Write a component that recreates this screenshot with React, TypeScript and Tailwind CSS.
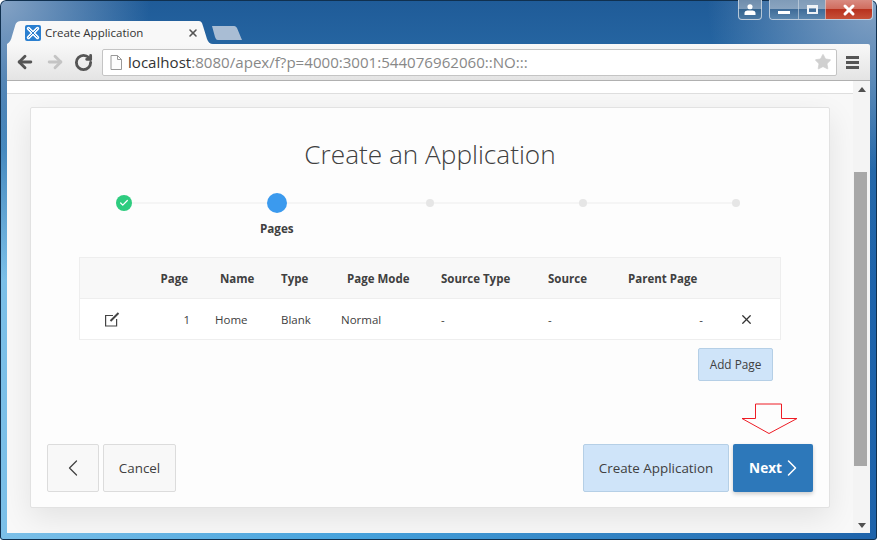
import { ArrowLeft, ArrowRight, Check, ChevronLeft, ChevronRight, RotateCw, Star, X } from 'lucide-react';

const OPEN_SANS = "font-['Open_Sans',sans-serif]";

const COLUMNS = [
  { head: '', headClass: '', cellClass: '' },
  { head: 'Page', headClass: 'text-right pr-[15px]', cellClass: 'text-right pr-[13px]', cell: '1' },
  { head: 'Name', headClass: 'pl-[17px]', cellClass: 'pl-[12px]', cell: 'Home' },
  { head: 'Type', headClass: 'pl-[12px]', cellClass: 'pl-[12px]', cell: 'Blank' },
  { head: 'Page Mode', headClass: 'pl-[18px]', cellClass: 'pl-[12px]', cell: 'Normal' },
  { head: 'Source Type', headClass: 'pl-[12px]', cellClass: 'pl-[12px]', cell: '-' },
  { head: 'Source', headClass: 'pl-[12px]', cellClass: 'pl-[12px]', cell: '-' },
  { head: 'Parent Page', headClass: 'pl-[12px]', cellClass: 'text-right pr-[11px]', cell: '-' },
  { head: '', headClass: '', cellClass: '' },
];

const GRID = 'grid grid-cols-[70px_53px_66px_60px_100px_107px_80px_98px_1fr] items-center';

function TitleBar() {
  return (
    <div className="flex h-[21px] shrink-0 justify-end pr-[4px]">
      <div className="flex h-[20px] w-[24px] flex-col items-center justify-center rounded-b-[4px] border border-t-0 border-[#d4dee8]/80 bg-[linear-gradient(180deg,#6f8dac_0,#7f9bb8_50%,#34648f_50%,#4a78a2_100%)]">
        <svg width="12" height="11" viewBox="0 0 12 12">
          <circle cx="6" cy="3" r="2.8" fill="#fff" />
          <path d="M0 12 V9.5 Q0 7.5 3 7 H9 Q12 7.5 12 9.5 V12 Z" fill="#fff" />
        </svg>
      </div>
      <div className="ml-[7px] flex h-[20px] rounded-b-[4px] border border-t-0 border-[#d4dee8]/80">
        <div className="flex w-[28px] justify-center rounded-bl-[4px] bg-[linear-gradient(180deg,#7f9bb8_0,#8ba5c0_50%,#3f6c98_50%,#5a86ae_100%)] pt-[11px]">
          <div className="h-[3px] w-[12px] bg-white" />
        </div>
        <div className="flex w-[27px] justify-center border-l border-[#d4dee8]/60 bg-[linear-gradient(180deg,#7f9bb8_0,#8ba5c0_50%,#3f6c98_50%,#5a86ae_100%)] pt-[5px]">
          <div className="h-[9px] w-[11px] border-2 border-t-[3px] border-[#eef2f6]" />
        </div>
        <div className="flex w-[47px] items-center justify-center rounded-br-[4px] border-l border-[#d4dee8]/60 bg-[linear-gradient(180deg,#d98a80_0,#cf6a5c_50%,#b8321f_50%,#c65038_100%)]">
          <X size={16} strokeWidth={4.5} className="text-white" />
        </div>
      </div>
    </div>
  );
}

function TabStrip() {
  return (
    <div className="relative mx-[7px] flex h-[23px] shrink-0 items-end">
      <div className="relative flex h-[23px] w-[206px] items-center pl-[18px] pr-[14px]">
        <svg className="absolute inset-0" width="206" height="23" viewBox="0 0 206 23">
          <path d="M0 23 C3 21 4 19 5 15 L8 5 C9 1 11 0 15 0 L191 0 C194 0 195 1 196 5 L200 18 C201 21 203 23 206 23 Z" fill="#f8f8f8" />
        </svg>
        <svg className="relative shrink-0" width="16" height="16" viewBox="0 0 16 16">
          <rect width="16" height="16" rx="2" fill="#2a7fd0" />
          <path d="M3.5 3.5 L12.5 12.5 M12.5 3.5 L3.5 12.5" stroke="#fff" strokeWidth="3.4" strokeLinecap="round" fill="none" />
          <path d="M3.5 3.5 L12.5 12.5 M12.5 3.5 L3.5 12.5" stroke="#2a7fd0" strokeWidth="1" fill="none" />
        </svg>
        <span className={`relative ml-[4px] flex-1 whitespace-nowrap text-[11.5px] text-[#333] ${OPEN_SANS}`}>Create Application</span>
        <X size={12} strokeWidth={3.2} className="relative text-[#555]" />
      </div>
      <svg className="mb-[4px] ml-[-1px]" width="30" height="14" viewBox="0 0 30 14">
        <path d="M0 0 L22 0 C24 0 24 1 25 2 L30 14 L6 14 C4 14 4 13 3 11 Z" fill="#a9bdd4" />
      </svg>
    </div>
  );
}

function Toolbar() {
  return (
    <div className="mx-[7px] flex h-[37px] shrink-0 items-center rounded-tr-[2px] border-b border-[#b0b0b0] bg-gradient-to-b from-[#f8f8f8] to-[#e4e4e4] pl-[8px] pr-[9px]">
      <ArrowLeft size={20} strokeWidth={3.4} className="text-[#555]" />
      <ArrowRight size={20} strokeWidth={3.4} className="ml-[10px] text-[#c4c4c4]" />
      <RotateCw size={19} strokeWidth={3.6} className="ml-[9px] text-[#555]" />
      <div className="ml-[9px] flex h-[27px] w-[735px] items-center rounded-[2px] border border-[#c4c4c4] bg-white pl-[7px] pr-[4px]">
        <svg width="12" height="15" viewBox="0 0 12 15" className="shrink-0">
          <path d="M1 .5 H7.5 L11.5 4.5 V14.5 H1 Z M7.5 .5 V4.5 H11.5" fill="#fdfdfd" stroke="#999" strokeWidth="1" />
        </svg>
        <span className={`ml-[6px] flex-1 whitespace-nowrap text-[15.1px] text-[#888] ${OPEN_SANS}`}>
          <span className="text-[#333]">localhost</span>:8080/apex/f?p=4000:3001:544076962060::NO:::
        </span>
        <Star size={18} fill="#d0d0d0" strokeWidth={1} className="text-[#d0d0d0]" />
      </div>
      <div className="ml-[9px] flex w-[13px] flex-col gap-[2px]">
        <div className="h-[3px] bg-[#555]" />
        <div className="h-[3px] bg-[#555]" />
        <div className="h-[3px] bg-[#555]" />
      </div>
    </div>
  );
}

function Stepper() {
  return (
    <div className="relative mt-[16px] grid h-[67px] grid-cols-5">
      <div className="absolute left-[76px] right-[76px] top-[12px] h-[2px] bg-[#f5f5f5]" />
      <div className="relative flex h-[26px] items-center justify-center">
        <div className="flex h-[16px] w-[16px] items-center justify-center rounded-full bg-[#2ecc7f]">
          <Check size={10} strokeWidth={3} className="text-white" />
        </div>
      </div>
      <div className="relative flex flex-col items-center">
        <div className="mt-[3px] h-[20px] w-[20px] rounded-full bg-[#3b9aee]" />
        <span className="mt-[7px] text-[11.7px] font-bold text-[#404040]">Pages</span>
      </div>
      {[0, 1, 2].map((i) => (
        <div key={i} className="relative flex h-[26px] items-center justify-center">
          <div className="h-[8px] w-[8px] rounded-full bg-[#e6e6e6]" />
        </div>
      ))}
    </div>
  );
}

function PagesTable() {
  return (
    <div className="mx-[32px] border border-[#eeeeee] bg-white text-[11.5px] text-[#404040]">
      <div className={`${GRID} h-[41px] border-b border-[#eeeeee] bg-[#f8f8f8] pt-[2px] text-[11.5px] font-bold`}>
        {COLUMNS.map((col, i) => (
          <div key={i} className={col.headClass}>{col.head}</div>
        ))}
      </div>
      <div className={`${GRID} h-[40px] pt-[2px]`}>
        <div className="pl-[24px]">
          <svg width="16" height="15" viewBox="0 0 16 15" className="-mt-[2px] text-[#444]">
            <path d="M9 3.5 H1.6 V14 H12.6 V7" fill="none" stroke="currentColor" strokeWidth="1.2" />
            <path d="M6.5 9 L14.5 1" fill="none" stroke="currentColor" strokeWidth="2" />
          </svg>
        </div>
        {COLUMNS.slice(1, 8).map((col) => (
          <div key={col.head} className={col.cellClass}>{col.cell}</div>
        ))}
        <div className="-mt-[2px] flex justify-center pr-[1px]">
          <X size={15} strokeWidth={2} className="text-[#333]" />
        </div>
      </div>
    </div>
  );
}

function Card() {
  return (
    <div className={`flex h-[401px] w-[800px] flex-col rounded-[2px] border border-[#e2e2e2] bg-[#fdfdfd] px-[16px] pb-[15px] pt-[26px] shadow-[0_10px_30px_rgba(0,0,0,0.09)] ${OPEN_SANS}`}>
      <h1 className="text-center text-[26.2px] font-light leading-[40px] text-[#404040]">Create an Application</h1>
      <Stepper />
      <PagesTable />
      <div className="mr-[40px] mt-[8px] flex justify-end">
        <button className="h-[33px] w-[75px] rounded-[2px] border border-[#b5cfe6] bg-[#cfe4f9] text-[11.8px] text-[#404040]">Add Page</button>
      </div>
      <div className="relative mt-auto flex h-[48px] items-stretch gap-[4px]">
        <button className="flex w-[52px] items-center justify-center rounded-[2px] border border-[#dcdcdc] bg-[#f8f8f8]">
          <ChevronLeft size={28} strokeWidth={1.1} className="text-[#444]" />
        </button>
        <button className="w-[73px] rounded-[2px] border border-[#dcdcdc] bg-[#f8f8f8] text-[13.4px] text-[#404040]">Cancel</button>
        <button className="ml-auto w-[146px] rounded-[2px] border border-[#b5cfe6] bg-[#cfe4f9] text-[13.4px] text-[#404040]">Create Application</button>
        <button className="flex w-[80px] items-center justify-center rounded-[2px] bg-[#2d78ba] pl-[9px] text-[13.6px] font-bold text-white shadow-[0_2px_4px_rgba(0,0,0,0.2)]">
          Next
          <ChevronRight size={28} strokeWidth={1.3} className="ml-[-4px]" />
        </button>
        <svg className="absolute right-[15px] top-[-41px]" width="57" height="32" viewBox="0 0 57 32">
          <path d="M14.5 1 H40.5 V15.5 H56 L28 30.5 L1 15.5 H14.5 Z" fill="none" stroke="#ee1c25" strokeWidth="1" />
        </svg>
      </div>
    </div>
  );
}

function Scrollbar() {
  return (
    <div className="flex w-[17px] shrink-0 flex-col items-center bg-[#f4f4f4]">
      <div className="flex h-[16px] w-full items-center justify-center">
        <div className="h-0 w-0 border-x-[4px] border-b-[5px] border-x-transparent border-b-[#505050]" />
      </div>
      <div className="ml-[-3px] mt-[75px] h-[294px] w-[13px] bg-[#a8a8a8]" />
      <div className="mt-auto flex h-[16px] w-full items-center justify-center">
        <div className="h-0 w-0 border-x-[4px] border-t-[5px] border-x-transparent border-t-[#505050]" />
      </div>
    </div>
  );
}

export default function App() {
  return (
    <div className="flex h-[540px] w-[877px] flex-col overflow-hidden rounded-t-[6px] rounded-b-[3px] bg-[radial-gradient(circle_at_0_0,#86a4c6_0,rgba(134,164,198,0)_150px),radial-gradient(circle_at_100%_0,#86a4c6_0,rgba(134,164,198,0)_170px),linear-gradient(180deg,#1f5b98_0,#2a6ca8_80px,rgba(42,108,168,0)_280px),linear-gradient(90deg,#7cc0e8_0,#46a2dc_40%,#1e63aa_100%)] shadow-[inset_0_0_0_1px_#10304f]">
      <TitleBar />
      <TabStrip />
      <Toolbar />
      <div className="mx-[7px] flex h-[452px] shrink-0 bg-white">
        <div className="flex min-w-0 flex-1 flex-col">
          <div className="box-content h-[12px] shrink-0 border-b border-[#dedede] bg-white" />
          <div className="flex-1 overflow-hidden bg-[#f8f8f8] pl-[23px] pt-[13px]">
            <Card />
          </div>
        </div>
        <Scrollbar />
      </div>
    </div>
  );
}
